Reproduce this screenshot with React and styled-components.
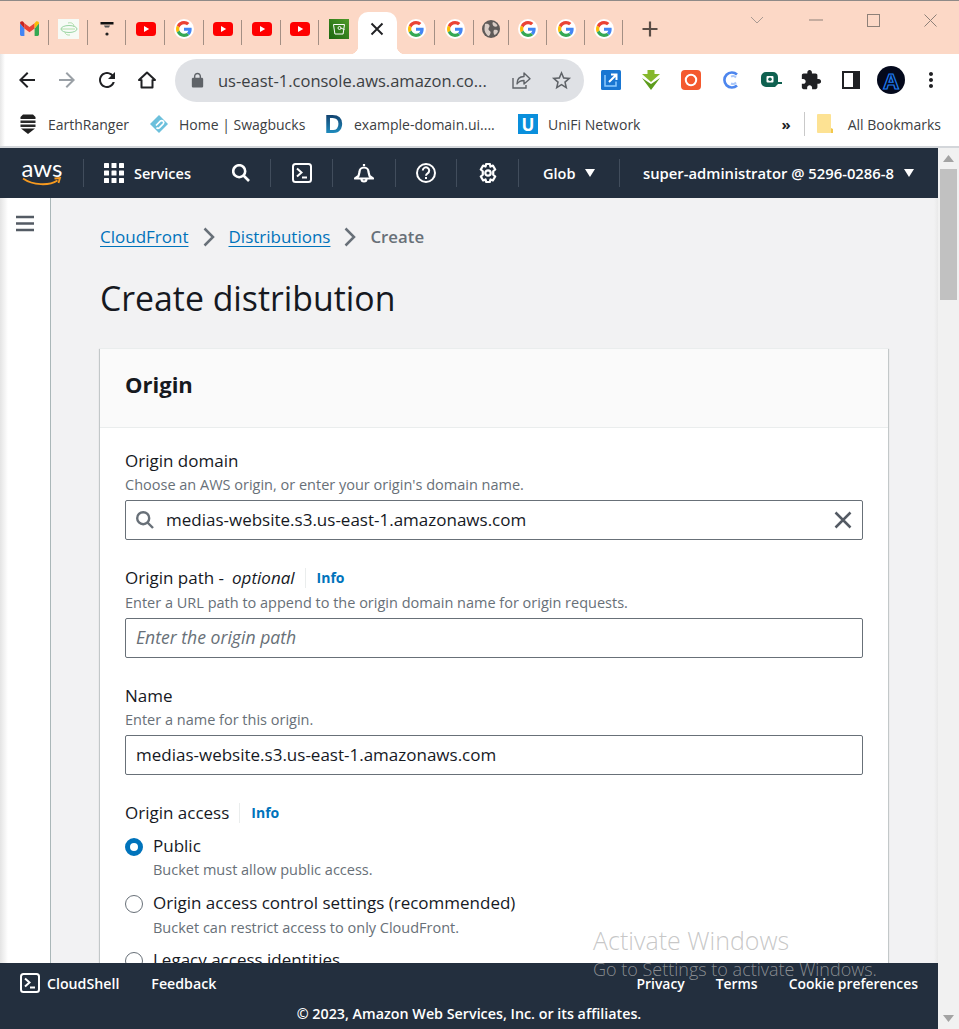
import React from 'react';
import styled, { createGlobalStyle } from 'styled-components';

const GlobalStyle = createGlobalStyle`
  html, body {
    margin: 0;
    padding: 0;
    height: 100%;
    overflow: hidden;
  }
  * { box-sizing: border-box; }
  #root { height: 100%; }
`;

const Page = styled.div`
  position: relative;
  display: flex;
  flex-direction: column;
  height: 100vh;
  overflow: hidden;
  background: #fff;
  font-family: "Open Sans", "Noto Sans", sans-serif;
`;

/* browser chrome */

const TabStrip = styled.div`
  display: flex;
  align-items: flex-end;
  height: 54px;
  padding-left: 10.7px;
  background: #fcd8c6;
  border-top: 1px solid #8f8a88;
`;

const Tab = styled.div`
  position: relative;
  display: flex;
  align-items: center;
  justify-content: center;
  width: ${(p) => p.$width || 38.6}px;
  height: 42px;
  padding-bottom: 9px;
  flex: none;
  color: #202124;
  background: ${(p) => (p.$active ? '#fff' : 'transparent')};
  border-radius: ${(p) => (p.$active ? '10px 10px 0 0' : '0')};

  ${(p) => p.$sep && `
    &::after {
      content: '';
      position: absolute;
      right: 0;
      top: 8px;
      height: 25px;
      width: 1px;
      background: #a38f84;
    }
  `}

  ${(p) => p.$active && `
    &::before {
      content: '';
      position: absolute;
      left: -8px;
      right: -8px;
      bottom: 0;
      height: 8px;
      background:
        radial-gradient(circle at 0 0, #fcd8c6 8px, #fff 8.5px) left bottom / 8px 8px no-repeat,
        radial-gradient(circle at 100% 0, #fcd8c6 8px, #fff 8.5px) right bottom / 8px 8px no-repeat;
    }
  `}
`;

const NewTab = styled.div`
  display: flex;
  align-items: center;
  justify-content: center;
  width: 30px;
  height: 42px;
  margin-left: 12px;
  padding-bottom: 9px;
`;

const WindowControls = styled.div`
  display: flex;
  align-items: center;
  gap: 44.2px;
  margin-left: auto;
  height: 38px;
  align-self: flex-start;
  padding-right: 22px;
`;

const Toolbar = styled.div`
  display: flex;
  align-items: center;
  height: 52px;
  padding-left: 15px;
  background: linear-gradient(90deg, #e6e6e6, #fff 5px);
`;

const ToolButton = styled.div`
  display: flex;
  align-items: center;
  justify-content: center;
  width: 24px;
  height: 24px;
  margin-right: ${(p) => p.$gap ?? 16}px;
  flex: none;
`;

const Omnibox = styled.div`
  display: flex;
  align-items: center;
  width: 409px;
  height: 43px;
  padding: 0 11px 0 14px;
  border-radius: 22px;
  background: #dfe1e5;
  flex: none;
`;

const Url = styled.span`
  flex: 1;
  margin-left: 12px;
  font-size: 16.5px;
  color: #3c4043;
  white-space: nowrap;
`;

const ExtensionRow = styled.div`
  display: flex;
  align-items: center;
  margin-left: 7px;
`;

const Extension = styled.div`
  display: flex;
  align-items: center;
  justify-content: center;
  width: 40px;
  height: 28px;
  flex: none;
`;

const Avatar = styled.div`
  display: flex;
  align-items: center;
  justify-content: center;
  width: 28px;
  height: 28px;
  border-radius: 50%;
  background: #04091c;
  color: transparent;
  -webkit-text-stroke: 1.2px #1f7df2;
  font-size: 22px;
  font-weight: 700;
`;

const BookmarkBar = styled.div`
  display: flex;
  align-items: center;
  height: 42px;
  padding: 0 0 4px 18px;
  background: linear-gradient(90deg, #e6e6e6, #fff 5px);
  border-bottom: 2px solid #d3d6da;
  font-size: 14px;
  color: #3c4043;
`;

const Bookmark = styled.div`
  display: flex;
  align-items: center;
  width: ${(p) => p.$width}px;
  flex: none;
  white-space: nowrap;
`;

const BookmarkIcon = styled.div`
  display: flex;
  align-items: center;
  justify-content: center;
  width: 20px;
  height: 20px;
  margin-right: 10px;
  flex: none;
`;

const LetterD = styled.span`
  font-family: "Liberation Sans", sans-serif;
  font-size: 26px;
  font-weight: 700;
  line-height: 20px;
  background: linear-gradient(180deg, #123f6b, #1f8fc2);
  -webkit-background-clip: text;
  background-clip: text;
  color: transparent;
`;

const LetterU = styled.span`
  display: flex;
  align-items: center;
  justify-content: center;
  width: 20px;
  height: 20px;
  background: #0a8fdc;
  color: #fff;
  font-size: 17px;
  font-weight: 700;
`;

const MoreBookmarks = styled.div`
  display: flex;
  align-items: center;
  margin-left: auto;
  height: 24px;
  font-size: 15px;
  font-weight: 700;
  padding-right: 13px;
  border-right: 1px solid #c9c9c9;
  color: #202124;
`;

const AllBookmarks = styled.div`
  display: flex;
  align-items: center;
  gap: 15px;
  padding: 0 18px 0 12px;
  white-space: nowrap;
`;

/* console */

const Console = styled.div`
  flex: 1;
  display: flex;
  min-height: 0;
`;

const ConsoleFrame = styled.div`
  flex: 1;
  display: flex;
  flex-direction: column;
  min-width: 0;
`;

const TopNav = styled.div`
  display: flex;
  align-items: center;
  height: 50px;
  flex: none;
  background: #232f3e;
  color: #fff;
  font-size: 14.5px;
  font-weight: 600;
`;

const NavCell = styled.div`
  display: flex;
  align-items: center;
  justify-content: ${(p) => (p.$left ? 'flex-start' : 'center')};
  width: ${(p) => p.$width}px;
  height: 28px;
  padding-left: ${(p) => p.$pad || 0}px;
  flex: none;
  white-space: nowrap;
  border-right: ${(p) => (p.$plain ? 'none' : '1px solid #414d5c')};
`;

const NavLabel = styled.span`
  margin-left: 10px;
`;

const AccountName = styled.span`
  font-size: 14.8px;
`;

const NavSearch = styled.span`
  display: flex;
  margin-left: 41px;
`;

const LogoBox = styled.div`
  display: flex;
  flex-direction: column;
  align-items: center;
  width: 40px;
`;

const LogoText = styled.span`
  font-family: "Lato", sans-serif;
  font-size: 24px;
  font-weight: 400;
  line-height: 18px;
  color: #fff;
`;

const Caret = styled.span`
  width: 0;
  height: 0;
  margin-left: ${(p) => p.$gap}px;
  border-left: 5.5px solid transparent;
  border-right: 5.5px solid transparent;
  border-top: 8px solid #fff;
`;

const Body = styled.div`
  flex: 1;
  display: flex;
  min-height: 0;
  overflow: hidden;
`;

const Sidebar = styled.div`
  width: 51px;
  flex: none;
  padding: 17px 0 0 15px;
  background: linear-gradient(90deg, #e4e4e4, #fff 8px);
  border-right: 1px solid #aab7b8;
`;

const Main = styled.main`
  flex: 1;
  min-width: 0;
  padding: 28px 50px 0 49px;
  background: linear-gradient(270deg, #e9e9e9, #f2f2f3 4px);
  color: #16191f;
`;

const Breadcrumbs = styled.nav`
  display: flex;
  align-items: center;
  height: 22px;
  padding-bottom: 2px;
  font-size: 17px;
`;

const Crumb = styled.a`
  color: #0073bb;
  text-decoration: underline;
  text-underline-offset: 3px;
`;

const CrumbCurrent = styled.span`
  color: #687078;
  font-size: 16.8px;
  font-weight: 600;
`;

const CrumbArrow = styled.span`
  display: flex;
  margin: 2px 14px 0 14px;
`;

const Title = styled.h1`
  margin: 30px 0 30px;
  font-size: 33.8px;
  line-height: 40px;
  font-weight: 400;
  color: #16191f;
`;

const Card = styled.section`
  background: #fff;
  box-shadow: 0 1px 1px 0 rgba(0, 28, 36, 0.3), 1px 1px 1px 0 rgba(0, 28, 36, 0.15), -1px 1px 1px 0 rgba(0, 28, 36, 0.15);
  border-top: 1px solid #eaeded;
`;

const CardHeader = styled.header`
  display: flex;
  align-items: center;
  height: 79px;
  padding: 0 25px 8px;
  background: #fafafa;
  border-bottom: 1px solid #eaeded;
`;

const CardTitle = styled.h2`
  margin: 0;
  font-size: 22px;
  font-weight: 700;
  color: #16191f;
`;

const CardBody = styled.div`
  padding: 22px 25px 0;
`;

const Field = styled.div`
  margin-bottom: 27.5px;
`;

const Label = styled.div`
  display: flex;
  align-items: center;
  height: 22px;
  padding-bottom: 2px;
  font-size: 17px;
  color: #16191f;
`;

const Optional = styled.em`
  margin-left: 8px;
  font-style: italic;
`;

const InfoLink = styled.a`
  margin-left: 10px;
  padding-left: 11px;
  border-left: 1px solid #eaeded;
  font-size: 14px;
  font-weight: 700;
  line-height: 20px;
  color: #0073bb;
`;

const Help = styled.div`
  height: 18px;
  margin-top: ${(p) => p.$top ?? 4}px;
  font-size: 14.5px;
  line-height: 18px;
  color: #687078;
  white-space: nowrap;
`;

const InputBox = styled.div`
  display: flex;
  align-items: center;
  height: 40px;
  margin-top: 6px;
  padding: 0 10px;
  border: 1px solid #687078;
  border-radius: 2px;
  font-size: ${(p) => (p.$placeholder ? 17.6 : 17)}px;
  color: ${(p) => (p.$placeholder ? '#687078' : '#16191f')};
  font-style: ${(p) => (p.$placeholder ? 'italic' : 'normal')};
`;

const InputText = styled.span`
  flex: 1;
  margin-top: -2px;
  margin-left: ${(p) => p.$indent || 0}px;
  white-space: nowrap;
`;

const RadioGroup = styled.div`
  margin-top: 11px;
`;

const RadioRow = styled.div`
  display: flex;
  align-items: center;
  gap: 10px;
  height: 22px;
  margin-top: ${(p) => p.$top || 0}px;
  font-size: 17px;
  color: #16191f;
  white-space: nowrap;
`;

const RadioText = styled.span`
  margin-top: -2px;
`;

const RadioDot = styled.span`
  width: 18px;
  height: 18px;
  border-radius: 50%;
  flex: none;
  background: #fff;
  border: ${(p) => (p.$checked ? '5px solid #0073bb' : '1.5px solid #687078')};
`;

const RadioHelp = styled(Help)`
  margin-left: 28px;
`;

const Footer = styled.footer`
  flex: none;
  height: 66px;
  background: #232f3e;
  color: #fff;
  font-size: 14.2px;
  font-weight: 600;
`;

const FooterTop = styled.div`
  display: flex;
  align-items: center;
  height: 40px;
  padding: 0 20px;
`;

const FooterLink = styled.span`
  margin-left: ${(p) => p.$gap || 0}px;
  white-space: nowrap;
`;

const FooterRight = styled.div`
  display: flex;
  margin-left: auto;
  gap: 31px;
  font-size: 13.9px;
`;

const FooterCopy = styled.div`
  text-align: center;
  font-size: 14.3px;
  line-height: 22px;
`;

const Scrollbar = styled.div`
  display: flex;
  flex-direction: column;
  align-items: center;
  justify-content: space-between;
  width: 21px;
  flex: none;
  background: #f1f1f1;
`;

const ScrollArrow = styled.div`
  display: flex;
  align-items: center;
  justify-content: center;
  width: 100%;
  height: 21px;
  flex: none;
`;

const ScrollThumb = styled.div`
  width: 17px;
  height: 131px;
  flex: none;
  background: #c1c1c1;
`;

const ScrollTrack = styled.div`
  flex: 1;
  display: flex;
  justify-content: center;
  width: 100%;
`;

const Watermark = styled.div`
  position: absolute;
  left: 593px;
  top: 924px;
  color: rgba(178, 178, 178, 0.72);
  font-weight: 300;
  pointer-events: none;
  white-space: nowrap;
`;

const WatermarkTitle = styled.div`
  font-size: 25px;
  line-height: 32px;
`;

const WatermarkSub = styled.div`
  font-size: 18px;
  line-height: 27px;
`;

/* favicons and icons */

const GoogleIcon = () => (
  <svg width="20" height="20" viewBox="-6 -6 60 60">
    <circle cx="24" cy="24" r="30" fill="#fff" />
    <path fill="#EA4335" d="M24 9.5c3.54 0 6.71 1.22 9.21 3.6l6.85-6.85C35.9 2.38 30.47 0 24 0 14.62 0 6.51 5.38 2.56 13.22l7.98 6.19C12.43 13.72 17.74 9.5 24 9.5z" />
    <path fill="#4285F4" d="M46.98 24.55c0-1.57-.15-3.09-.38-4.55H24v9.02h12.94c-.58 2.96-2.26 5.48-4.78 7.18l7.73 6c4.51-4.18 7.09-10.36 7.09-17.65z" />
    <path fill="#FBBC05" d="M10.53 28.59c-.48-1.45-.76-2.99-.76-4.59s.27-3.14.76-4.59l-7.98-6.19C.92 16.46 0 20.12 0 24c0 3.88.92 7.54 2.56 10.78l7.97-6.19z" />
    <path fill="#34A853" d="M24 48c6.48 0 11.93-2.13 15.89-5.81l-7.73-6c-2.15 1.45-4.92 2.3-8.16 2.3-6.26 0-11.57-4.22-13.47-9.91l-7.98 6.19C6.51 42.62 14.62 48 24 48z" />
  </svg>
);

const YoutubeIcon = () => (
  <svg width="20" height="14" viewBox="0 0 20 14">
    <rect width="20" height="14" rx="3.5" fill="#f00" />
    <path d="M8 4l5.2 3L8 10z" fill="#fff" />
  </svg>
);

const GmailIcon = () => (
  <svg width="19" height="15" viewBox="0 0 19 15">
    <path d="M0 2.2V13.5c0 .8.6 1.4 1.4 1.4h3V7.5z" fill="#4285f4" />
    <path d="M14.6 7.5v7.4h3c.8 0 1.4-.6 1.4-1.4V2.2z" fill="#34a853" />
    <path d="M4.4 7.5V2.3L9.5 6.100l5.100-3.800v5.200L9.500 11.300z" fill="#ea4335" />
    <path d="M0 2.2 4.4 7.5V2.3L3.2.8C2-.2 0 .5 0 2.200z" fill="#c5221f" />
    <path d="M19 2.2 14.6 7.5V2.3L15.800.8c1.200-1 3.200-.3 3.200 1.400z" fill="#fbbc04" />
  </svg>
);

const LeafIcon = () => (
  <svg width="21" height="20" viewBox="0 0 21 20">
    <rect width="21" height="20" fill="#f7fbf6" />
    <ellipse cx="11" cy="10" rx="8" ry="3.500" fill="none" stroke="#8fcf9a" strokeWidth="0.9" />
    <path d="M3 10h14M10 4c4-1 6 1 6 4M12 16c-3 .5-5-1-5-3" fill="none" stroke="#a8d9a0" strokeWidth="0.9" />
  </svg>
);

const FilterIcon = () => (
  <svg width="14" height="14" viewBox="0 0 14 14">
    <rect x="0.500" y="0" width="13" height="2.500" fill="#111" />
    <path d="M4 3.500h6L9 5.500H5z" fill="#555" />
    <circle cx="7" cy="12" r="1.600" fill="#222" />
  </svg>
);

const BucketIcon = () => (
  <svg width="20" height="20" viewBox="0 0 20 20">
    <defs>
      <linearGradient id="bucketBg" x1="0" y1="1" x2="1" y2="0">
        <stop offset="0" stopColor="#1b660f" />
        <stop offset="1" stopColor="#4f9a2a" />
      </linearGradient>
    </defs>
    <rect width="20" height="20" fill="url(#bucketBg)" />
    <path d="M4.500 5.500h11l-1.400 9.500H5.900z" fill="none" stroke="#fff" strokeWidth="1" />
    <circle cx="10.500" cy="9" r="1.500" fill="none" stroke="#fff" strokeWidth="0.9" />
    <path d="M11.500 9l4 1.500" stroke="#fff" strokeWidth="0.9" />
  </svg>
);

const GlobeIcon = () => (
  <svg width="18" height="18" viewBox="0 0 18 18">
    <circle cx="9" cy="9" r="9" fill="#5f5b59" />
    <path d="M3 4c2-.5 4 0 4.500 1.500S6 8 6.500 9.500 9 11 8.500 13 7 16.500 6 16C4 14 2 11 2.500 8zM11 2c2 .5 4 2 4.500 4-1 1-3 1-4 0S10 3 11 2zM12 10c1.500-.5 3.500 0 4 1-.5 2-2 3.500-3.500 4-1-1-1.500-4-.5-5z" fill="#d9cdc6" />
  </svg>
);

const CloseTab = () => (
  <svg width="14" height="14" viewBox="0 0 14 14" stroke="#202124" strokeWidth="1.900">
    <path d="M1.500 1.500l11 11M12.500 1.500l-11 11" />
  </svg>
);

const Material = ({ size = 24, fill = '#202124', d }) => (
  <svg width={size} height={size} viewBox="0 0 24 24" fill={fill}>
    <path d={d} />
  </svg>
);

const ICONS = {
  back: 'M20 11H7.830l5.590-5.590L12 4l-8 8 8 8 1.410-1.410L7.830 13H20v-2z',
  forward: 'M12 4l-1.410 1.410L16.170 11H4v2h12.170l-5.580 5.590L12 20l8-8z',
  reload: 'M17.650 6.350C16.200 4.900 14.210 4 12 4c-4.420 0-7.990 3.580-7.990 8s3.570 8 7.990 8c3.730 0 6.840-2.550 7.730-6h-2.080c-.820 2.330-3.040 4-5.650 4-3.310 0-6-2.690-6-6s2.690-6 6-6c1.660 0 3.140.690 4.220 1.780L13 11h7V4l-2.350 2.350z',
  lock: 'M18 8h-1V6c0-2.760-2.240-5-5-5S7 3.240 7 6v2H6c-1.100 0-2 .9-2 2v10c0 1.100.9 2 2 2h12c1.100 0 2-.9 2-2V10c0-1.100-.9-2-2-2zM9 8V6c0-1.660 1.340-3 3-3s3 1.340 3 3v2H9z',
  star: 'M22 9.240l-7.190-.620L12 2 9.190 8.630 2 9.240l5.460 4.730L5.820 21 12 17.270 18.180 21l-1.630-7.030L22 9.240zM12 15.400l-3.760 2.270 1-4.280-3.320-2.880 4.380-.380L12 6.100l1.710 4.040 4.380.380-3.320 2.880 1 4.280L12 15.400z',
  puzzle: 'M20.500 11H19V7c0-1.100-.9-2-2-2h-4V3.500C13 2.120 11.880 1 10.500 1S8 2.120 8 3.500V5H4c-1.100 0-1.990.9-1.990 2v3.800H3.500c1.490 0 2.700 1.210 2.700 2.700s-1.210 2.700-2.700 2.700H2V20c0 1.100.9 2 2 2h3.800v-1.500c0-1.490 1.210-2.700 2.700-2.700 1.490 0 2.700 1.210 2.700 2.700V22H17c1.100 0 2-.9 2-2v-4h1.500c1.380 0 2.500-1.120 2.500-2.500S21.880 11 20.500 11z',
  kebab: 'M12 8c1.100 0 2-.9 2-2s-.9-2-2-2-2 .9-2 2 .9 2 2 2zm0 2c-1.100 0-2 .9-2 2s.9 2 2 2 2-.9 2-2-.9-2-2-2zm0 6c-1.100 0-2 .9-2 2s.9 2 2 2 2-.9 2-2-.9-2-2-2z',
};

const HomeIcon = () => (
  <svg width="20" height="20" viewBox="0 0 20 20" fill="none" stroke="#202124" strokeWidth="2" strokeLinejoin="round">
    <path d="M10 2.500 2 10h2.500v7.500h11V10H18z" />
  </svg>
);

const ShareIcon = () => (
  <svg width="20" height="20" viewBox="0 0 20 20" fill="none" stroke="#5f6368" strokeWidth="1.400">
    <path d="M2 8v10h13v-3" />
    <path d="M6 14c0-5 3-7.500 7-7.500V3l6 5.800-6 5.200v-3.500c-3 0-5.500 1-7 3.500z" strokeLinejoin="round" />
  </svg>
);

const OpenLinkExt = () => (
  <svg width="20" height="20" viewBox="0 0 20 20">
    <rect width="20" height="20" rx="1.500" fill="#1976d2" />
    <path d="M4 5v11h11v-4.500" fill="none" stroke="#8ecbff" strokeWidth="1.500" />
    <path d="M8 12 15 5M10 4.500h5.500V10" fill="none" stroke="#fff" strokeWidth="2" />
  </svg>
);

const DownloadExt = () => (
  <svg width="20" height="20" viewBox="0 0 20 20">
    <path d="M6.500 0h7v4H19l-9 8-9-8h5.500z" fill="#86b82c" />
    <path d="M1 8l9 12 9-12-9 6z" fill="#5d9c1c" />
  </svg>
);

const RecordExt = () => (
  <svg width="20" height="20" viewBox="0 0 20 20">
    <rect width="20" height="20" rx="4" fill="#f4592e" />
    <circle cx="10" cy="10" r="5.200" fill="none" stroke="#fff" strokeWidth="2" />
  </svg>
);

const ArcExt = () => (
  <svg width="18" height="20" viewBox="0 0 18 20" fill="none">
    <path d="M15 4.500A7.500 7.500 0 1 0 15 15.500" stroke="#4d86ee" strokeWidth="2.600" />
    <path d="M14 7.500A4 4 0 0 0 9 6.600M9 13.500a4 4 0 0 0 5-1" stroke="#a9c6f8" strokeWidth="2" />
  </svg>
);

const CameraExt = () => (
  <svg width="21" height="18" viewBox="0 0 21 18">
    <path d="M5 1h7a5 5 0 0 1 5 5v5h4v2h-4l-3 3H5a5 5 0 0 1-5-5V6a5 5 0 0 1 5-5z" fill="#0f6150" />
    <rect x="5.500" y="5" width="7" height="6.500" rx="1" fill="#fff" />
    <circle cx="9" cy="8.200" r="1.800" fill="#0f6150" />
  </svg>
);

const PanelExt = () => (
  <svg width="18" height="18" viewBox="0 0 18 18">
    <rect x="1" y="1" width="16" height="16" fill="#fff" stroke="#202124" strokeWidth="2" />
    <rect x="11" y="1" width="6" height="16" fill="#202124" />
  </svg>
);

const EarthRangerIcon = () => (
  <svg width="16" height="20" viewBox="0 0 16 20">
    <path d="M3 0.500h10L15.500 3v2H.5V3z" fill="#202020" />
    <path d="M.5 6.500h15v2.500H.5zM.5 10.500h15V13H.5z" fill="#2b2b2b" />
    <path d="M1 14.500h14L8 20z" fill="#202020" />
  </svg>
);

const SwagbucksIcon = () => (
  <svg width="20" height="20" viewBox="0 0 20 20" fill="none">
    <path d="M10 1 19 10l-9 9-9-9z" fill="#6cc0dc" />
    <path d="M7 11.500 11.500 7a2 2 0 0 1 2.800 2.800L10.500 13.600a2.200 2.200 0 0 1-3 0" stroke="#fff" strokeWidth="1.700" />
  </svg>
);

const FolderIcon = () => (
  <svg width="16" height="20" viewBox="0 0 16 20">
    <path d="M0 1a1 1 0 0 1 1-1h12a1 1 0 0 1 1 1v18H1a1 1 0 0 1-1-1z" fill="#fde293" />
    <path d="M14 14l2 1v4h-2z" fill="#f2c84b" />
  </svg>
);

const AwsSmile = () => (
  <svg width="40" height="10" viewBox="0 0 40 10" fill="none">
    <path d="M1 1.500C11 8.500 27 9 35.500 3.500" stroke="#f79a1f" strokeWidth="1.800" />
    <path d="M32.500 1.500 38 1l-1.500 5" stroke="#f79a1f" strokeWidth="1.800" />
  </svg>
);

const GridIcon = () => (
  <svg width="20" height="20" viewBox="0 0 20 20" fill="#fff">
    {[0, 7.500, 15].map((y) => [0, 7.500, 15].map((x) => (
      <rect key={`${x}-${y}`} x={x} y={y} width="5" height="5" rx="0.600" />
    )))}
  </svg>
);

const TerminalIcon = ({ size = 20 }) => (
  <svg width={size} height={size} viewBox="0 0 20 20" fill="none" stroke="#fff" strokeWidth="2">
    <rect x="1" y="1" width="18" height="18" rx="2.500" />
    <path d="M5 5.500 9.500 9.500 5 13.500M10 14.500h5" />
  </svg>
);

const BellIcon = () => (
  <svg width="20" height="20" viewBox="0 0 20 20" fill="none" stroke="#fff" strokeWidth="2.200" strokeLinejoin="round">
    <path d="M10 1v2M5.500 9a4.500 4.500 0 0 1 9 0l1 4 3.500 2.500H1L4.500 13z" />
    <path d="M7.500 16a2.500 2.500 0 0 0 5 0" />
  </svg>
);

const HelpIcon = () => (
  <svg width="20" height="20" viewBox="0 0 20 20" fill="none" stroke="#fff" strokeWidth="2">
    <circle cx="10" cy="10" r="9" />
    <path d="M6.800 7.500a3.200 3.200 0 1 1 4.800 2.800c-1 .6-1.600 1-1.600 2.400" />
    <path d="M10 14v2" />
  </svg>
);

const GearIcon = () => (
  <svg width="20" height="20" viewBox="0 0 20 20" fill="none" stroke="#fff" strokeWidth="2.200" strokeLinejoin="round">
    <circle cx="10" cy="10" r="2.700" />
    <path d="M8.200 1h3.600l.7 2.600 2.400-1 2.300 3.900-2 1.800v3.400l2 1.800-2.300 3.900-2.400-1-.7 2.600H8.200l-.7-2.600-2.400 1-2.300-3.900 2-1.800V8.300l-2-1.800 2.300-3.900 2.400 1z" />
  </svg>
);

const Magnifier = ({ color, width = 2.400 }) => (
  <svg width="18" height="18" viewBox="0 0 18 18" fill="none" stroke={color} strokeWidth={width}>
    <circle cx="7.200" cy="7.200" r="6" />
    <path d="M11.500 11.500 17 17" />
  </svg>
);

const ClearIcon = () => (
  <svg width="18" height="18" viewBox="0 0 18 18" stroke="#545b64" strokeWidth="2.500">
    <path d="M1.500 1.500l15 15M16.500 1.500l-15 15" />
  </svg>
);

const CrumbChevron = () => (
  <svg width="12" height="20" viewBox="0 0 12 20" fill="none" stroke="#687078" strokeWidth="2.500">
    <path d="M1.500 1.500 10 10l-8.500 8.500" />
  </svg>
);

const Hamburger = () => (
  <svg width="20" height="18" viewBox="0 0 20 18" stroke="#545b64" strokeWidth="2.400">
    <path d="M1 2h18M1 8.500h18M1 15h18" />
  </svg>
);

const Triangle = ({ down }) => (
  <svg width="11" height="7" viewBox="0 0 11 7" fill="#a3a3a3">
    <path d={down ? 'M0 0h11L5.500 7z' : 'M5.500 0 11 7H0z'} />
  </svg>
);

const WinChevron = () => (
  <svg width="14" height="9" viewBox="0 0 14 9" fill="none" stroke="#a89a92" strokeWidth="1">
    <path d="M1 1l6 6 6-6" />
  </svg>
);

const WinMin = () => (
  <svg width="14" height="2" viewBox="0 0 14 2" stroke="#8d8078"><path d="M0 1h14" /></svg>
);

const WinMax = () => (
  <svg width="13" height="13" viewBox="0 0 13 13" fill="none" stroke="#8d8078"><rect x="0.500" y="0.500" width="12" height="12" /></svg>
);

const WinClose = () => (
  <svg width="13" height="13" viewBox="0 0 13 13" stroke="#8d8078"><path d="M0.500 0.500l12 12M12.500 0.500l-12 12" /></svg>
);

const PlusIcon = () => (
  <svg width="16" height="16" viewBox="0 0 16 16" stroke="#5a4d46" strokeWidth="2.200"><path d="M8 0.500v15M0.500 8h15" /></svg>
);

const tabs = [
  { icon: <GmailIcon />, sep: true },
  { icon: <LeafIcon />, sep: true },
  { icon: <FilterIcon />, sep: true },
  { icon: <YoutubeIcon />, sep: true },
  { icon: <GoogleIcon />, sep: true },
  { icon: <YoutubeIcon />, sep: true },
  { icon: <YoutubeIcon />, sep: true },
  { icon: <YoutubeIcon />, sep: true },
  { icon: <BucketIcon /> },
  { icon: <CloseTab />, active: true },
  { icon: <GoogleIcon />, sep: true },
  { icon: <GoogleIcon />, sep: true },
  { icon: <GlobeIcon />, sep: true, width: 35 },
  { icon: <GoogleIcon />, sep: true, width: 38 },
  { icon: <GoogleIcon />, sep: true, width: 38 },
  { icon: <GoogleIcon />, sep: true, width: 38 },
];

const App = () => (
  <Page>
    <GlobalStyle />

    <TabStrip>
      {tabs.map((tab, i) => (
        <Tab key={i} $active={tab.active} $sep={tab.sep} $width={tab.width}>{tab.icon}</Tab>
      ))}
      <NewTab><PlusIcon /></NewTab>
      <WindowControls>
        <WinChevron />
        <WinMin />
        <WinMax />
        <WinClose />
      </WindowControls>
    </TabStrip>

    <Toolbar>
      <ToolButton><Material d={ICONS.back} /></ToolButton>
      <ToolButton><Material d={ICONS.forward} fill="#9aa0a6" /></ToolButton>
      <ToolButton><Material d={ICONS.reload} /></ToolButton>
      <ToolButton><HomeIcon /></ToolButton>
      <Omnibox>
        <Material size={17} fill="#5f6368" d={ICONS.lock} />
        <Url>us-east-1.console.aws.amazon.co...</Url>
        <ToolButton><ShareIcon /></ToolButton>
        <ToolButton $gap={0}><Material size={23} fill="#5f6368" d={ICONS.star} /></ToolButton>
      </Omnibox>
      <ExtensionRow>
        <Extension><OpenLinkExt /></Extension>
        <Extension><DownloadExt /></Extension>
        <Extension><RecordExt /></Extension>
        <Extension><ArcExt /></Extension>
        <Extension><CameraExt /></Extension>
        <Extension><Material size={22} d={ICONS.puzzle} /></Extension>
        <Extension><PanelExt /></Extension>
        <Extension><Avatar>A</Avatar></Extension>
        <Extension><Material size={24} d={ICONS.kebab} /></Extension>
      </ExtensionRow>
    </Toolbar>

    <BookmarkBar>
      <Bookmark $width={131}><BookmarkIcon><EarthRangerIcon /></BookmarkIcon>EarthRanger</Bookmark>
      <Bookmark $width={175}><BookmarkIcon><SwagbucksIcon /></BookmarkIcon>Home | Swagbucks</Bookmark>
      <Bookmark $width={194}><BookmarkIcon><LetterD>D</LetterD></BookmarkIcon>example-domain.ui....</Bookmark>
      <Bookmark $width={150}><BookmarkIcon><LetterU>U</LetterU></BookmarkIcon>UniFi Network</Bookmark>
      <MoreBookmarks>»</MoreBookmarks>
      <AllBookmarks><FolderIcon />All Bookmarks</AllBookmarks>
    </BookmarkBar>

    <Console>
      <ConsoleFrame>
        <TopNav>
          <NavCell $width={84} $left $pad={22}>
            <LogoBox>
              <LogoText>aws</LogoText>
              <AwsSmile />
            </LogoBox>
          </NavCell>
          <NavCell $width={187} $left $pad={20}>
            <GridIcon />
            <NavLabel>Services</NavLabel>
            <NavSearch><Magnifier color="#fff" width={2.600} /></NavSearch>
          </NavCell>
          <NavCell $width={62}><TerminalIcon /></NavCell>
          <NavCell $width={63}><BellIcon /></NavCell>
          <NavCell $width={61}><HelpIcon /></NavCell>
          <NavCell $width={62}><GearIcon /></NavCell>
          <NavCell $width={101} $left $pad={24}>Glob<Caret $gap={10} /></NavCell>
          <NavCell $width={318} $left $pad={23} $plain><AccountName>super-administrator @ 5296-0286-8</AccountName><Caret $gap={10} /></NavCell>
        </TopNav>

        <Body>
          <Sidebar><Hamburger /></Sidebar>
          <Main>
            <Breadcrumbs>
              <Crumb>CloudFront</Crumb>
              <CrumbArrow><CrumbChevron /></CrumbArrow>
              <Crumb>Distributions</Crumb>
              <CrumbArrow><CrumbChevron /></CrumbArrow>
              <CrumbCurrent>Create</CrumbCurrent>
            </Breadcrumbs>
            <Title>Create distribution</Title>
            <Card>
              <CardHeader><CardTitle>Origin</CardTitle></CardHeader>
              <CardBody>
                <Field>
                  <Label>Origin domain</Label>
                  <Help>Choose an AWS origin, or enter your origin's domain name.</Help>
                  <InputBox>
                    <Magnifier color="#687078" />
                    <InputText $indent={12}>medias-website.s3.us-east-1.amazonaws.com</InputText>
                    <ClearIcon />
                  </InputBox>
                </Field>
                <Field>
                  <Label>Origin path -<Optional>optional</Optional><InfoLink>Info</InfoLink></Label>
                  <Help>Enter a URL path to append to the origin domain name for origin requests.</Help>
                  <InputBox $placeholder><InputText>Enter the origin path</InputText></InputBox>
                </Field>
                <Field>
                  <Label>Name</Label>
                  <Help>Enter a name for this origin.</Help>
                  <InputBox><InputText>medias-website.s3.us-east-1.amazonaws.com</InputText></InputBox>
                </Field>
                <Field>
                  <Label>Origin access<InfoLink>Info</InfoLink></Label>
                  <RadioGroup>
                    <RadioRow><RadioDot $checked /><RadioText>Public</RadioText></RadioRow>
                    <RadioHelp $top={3}>Bucket must allow public access.</RadioHelp>
                    <RadioRow $top={14}><RadioDot /><RadioText>Origin access control settings (recommended)</RadioText></RadioRow>
                    <RadioHelp $top={4}>Bucket can restrict access to only CloudFront.</RadioHelp>
                    <RadioRow $top={13}><RadioDot /><RadioText>Legacy access identities</RadioText></RadioRow>
                  </RadioGroup>
                </Field>
              </CardBody>
            </Card>
          </Main>
        </Body>

        <Footer>
          <FooterTop>
            <TerminalIcon />
            <FooterLink $gap={7}>CloudShell</FooterLink>
            <FooterLink $gap={32}>Feedback</FooterLink>
            <FooterRight>
              <FooterLink>Privacy</FooterLink>
              <FooterLink>Terms</FooterLink>
              <FooterLink>Cookie preferences</FooterLink>
            </FooterRight>
          </FooterTop>
          <FooterCopy>© 2023, Amazon Web Services, Inc. or its affiliates.</FooterCopy>
        </Footer>
      </ConsoleFrame>

      <Scrollbar>
        <ScrollArrow><Triangle /></ScrollArrow>
        <ScrollTrack><ScrollThumb /></ScrollTrack>
        <ScrollArrow><Triangle down /></ScrollArrow>
      </Scrollbar>
    </Console>

    <Watermark>
      <WatermarkTitle>Activate Windows</WatermarkTitle>
      <WatermarkSub>Go to Settings to activate Windows.</WatermarkSub>
    </Watermark>
  </Page>
);

export default App;
